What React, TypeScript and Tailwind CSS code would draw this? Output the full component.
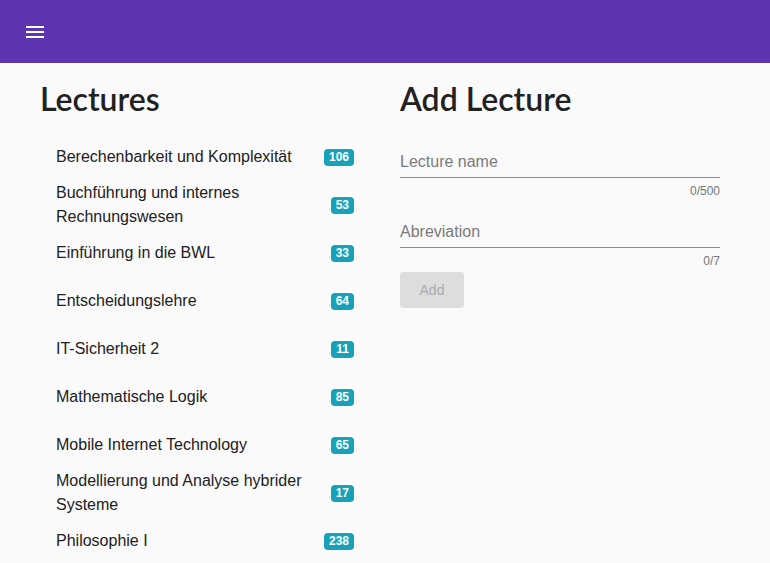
import React from 'react';

const lectures = [
  { name: 'Berechenbarkeit und Komplexität', count: 106 },
  { name: 'Buchführung und internes Rechnungswesen', count: 53 },
  { name: 'Einführung in die BWL', count: 33 },
  { name: 'Entscheidungslehre', count: 64 },
  { name: 'IT-Sicherheit 2', count: 11 },
  { name: 'Mathematische Logik', count: 85 },
  { name: 'Mobile Internet Technology', count: 65 },
  { name: 'Modellierung und Analyse hybrider Systeme', count: 17 },
  { name: 'Philosophie I', count: 238 },
];

const Field: React.FC<{ label: string; max: number }> = ({ label, max }) => (
  <div className="mb-[8px]">
    <div className="h-[41px] pt-[13px] border-b border-[#8a8a8a] text-[16px] leading-[24px] text-[#7a7a7a]">
      {label}
    </div>
    <div className="mt-[5px] text-right text-[12px] leading-[16px] text-[#757575]">0/{max}</div>
  </div>
);

export default function App() {
  return (
    <div className="min-h-screen bg-[#fafafa] font-['Liberation_Sans',Arial,sans-serif] text-[#212121]">
      {/* Toolbar */}
      <header className="h-[63px] bg-[#5e35b1] flex items-center px-[23px]">
        <svg width="24" height="24" viewBox="0 0 24 24" fill="white">
          <path d="M3 18h18v-2H3v2zm0-5h18v-2H3v2zm0-7v2h18V6H3z" />
        </svg>
      </header>

      <main className="flex gap-[30px] px-[40px]">
        {/* Lectures list */}
        <section className="w-[330px]">
          <h1 className="font-['Lato',sans-serif] font-semibold text-[32px] leading-[40px] mt-[16px] mb-[14px]">
            Lectures
          </h1>
          <ul>
            {lectures.map((l) => (
              <li key={l.name} className="h-[48px] flex items-center justify-between px-[16px]">
                <span className="text-[16px] leading-[24px] pr-[16px]">{l.name}</span>
                <span className="shrink-0 bg-[#17a2b8] text-white text-[12px] font-bold leading-[17px] px-[5px] rounded-[4px]">
                  {l.count}
                </span>
              </li>
            ))}
          </ul>
        </section>

        {/* Add lecture form */}
        <section className="w-[320px]">
          <h1 className="font-['Lato',sans-serif] font-semibold text-[32px] leading-[40px] mt-[16px] mb-[18px]">
            Add Lecture
          </h1>
          <Field label="Lecture name" max={500} />
          <Field label="Abreviation" max={7} />
          <button
            disabled
            className="-mt-[5px] w-[64px] h-[36px] rounded-[4px] bg-[#dddddd] text-[#ababab] text-[14px]"
          >
            Add
          </button>
        </section>
      </main>
    </div>
  );
}
